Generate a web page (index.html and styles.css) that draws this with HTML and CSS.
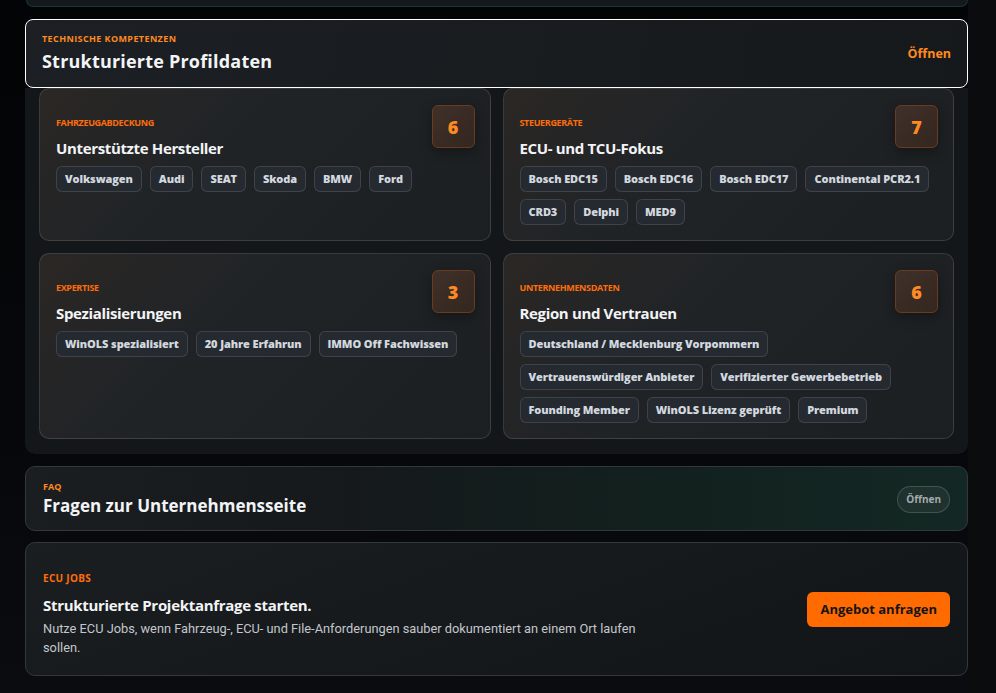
FILE: index.html
```html
<!DOCTYPE html>
<html lang="de">

<head>
    <meta charset="UTF-8">
    <meta name="viewport" content="width=device-width, initial-scale=1.0">
    <title>Unternehmensprofil</title>
    <link rel="stylesheet" href="styles.css">
</head>

<body>
    <div class="page">
        <main class="main">
            <div class="prev-card"></div>

            <section class="block">
                <div class="block-head">
                    <div>
                        <p class="eyebrow eyebrow-wide">Technische Kompetenzen</p>
                        <h2 class="block-title">Strukturierte Profildaten</h2>
                    </div>
                    <a class="link-open" href="#">Öffnen</a>
                </div>

                <div class="block-body">
                    <div class="card">
                        <div class="card-head">
                            <div class="card-text">
                                <p class="eyebrow eyebrow-card">Fahrzeugabdeckung</p>
                                <h3 class="card-title">Unterstützte Hersteller</h3>
                            </div>
                            <span class="count">6</span>
                        </div>
                        <div class="chips">
                            <span class="chip">Volkswagen</span>
                            <span class="chip">Audi</span>
                            <span class="chip">SEAT</span>
                            <span class="chip">Skoda</span>
                            <span class="chip">BMW</span>
                            <span class="chip">Ford</span>
                        </div>
                    </div>

                    <div class="card">
                        <div class="card-head">
                            <div class="card-text">
                                <p class="eyebrow eyebrow-card">Steuergeräte</p>
                                <h3 class="card-title">ECU- und TCU-Fokus</h3>
                            </div>
                            <span class="count">7</span>
                        </div>
                        <div class="chips">
                            <span class="chip">Bosch EDC15</span>
                            <span class="chip">Bosch EDC16</span>
                            <span class="chip">Bosch EDC17</span>
                            <span class="chip">Continental PCR2.1</span>
                            <span class="chip">CRD3</span>
                            <span class="chip">Delphi</span>
                            <span class="chip">MED9</span>
                        </div>
                    </div>

                    <div class="card">
                        <div class="card-head">
                            <div class="card-text">
                                <p class="eyebrow eyebrow-card">Expertise</p>
                                <h3 class="card-title">Spezialisierungen</h3>
                            </div>
                            <span class="count">3</span>
                        </div>
                        <div class="chips">
                            <span class="chip">WinOLS spezialisiert</span>
                            <span class="chip">20 Jahre Erfahrun</span>
                            <span class="chip">IMMO Off Fachwissen</span>
                        </div>
                    </div>

                    <div class="card">
                        <div class="card-head">
                            <div class="card-text">
                                <p class="eyebrow eyebrow-card">Unternehmensdaten</p>
                                <h3 class="card-title">Region und Vertrauen</h3>
                            </div>
                            <span class="count">6</span>
                        </div>
                        <div class="chips">
                            <span class="chip">Deutschland / Mecklenburg Vorpommern</span>
                            <span class="chip">Vertrauenswürdiger Anbieter</span>
                            <span class="chip">Verifizierter Gewerbebetrieb</span>
                            <span class="chip">Founding Member</span>
                            <span class="chip">WinOLS Lizenz geprüft</span>
                            <span class="chip">Premium</span>
                        </div>
                    </div>
                </div>
            </section>

            <section class="faq">
                <div>
                    <p class="eyebrow">FAQ</p>
                    <h2 class="faq-title">Fragen zur Unternehmensseite</h2>
                </div>
                <button class="pill">Öffnen</button>
            </section>

            <section class="cta">
                <div class="cta-text">
                    <p class="eyebrow eyebrow-jobs">ECU Jobs</p>
                    <h2 class="cta-title">Strukturierte Projektanfrage starten.</h2>
                    <p class="cta-copy">Nutze ECU Jobs, wenn Fahrzeug-, ECU- und File-Anforderungen sauber dokumentiert an einem Ort laufen sollen.</p>
                </div>
                <button class="btn-orange">Angebot anfragen</button>
            </section>
        </main>
        <div class="rail"></div>
    </div>
</body>

</html>
```

FILE: styles.css
```css
* {
    margin: 0;
    padding: 0;
    box-sizing: border-box;
}

body {
    background: #090b0e;
    font-family: "Open Sans", "Noto Sans", sans-serif;
    color: #f2f4f6;
    overflow: hidden;
}

.page {
    display: flex;
    height: 693px;
}

.main {
    width: 968px;
    padding-left: 25px;
    background: linear-gradient(180deg, #020405 0%, #05070a 60%, #0a0c0f 100%);
}

.rail {
    flex: 1;
    background: #0a0c0e;
}

/* leftover bottom of the card above */
.prev-card {
    height: 7px;
    margin-left: 1px;
    border: 1px solid #1b3633;
    border-top: 0;
    border-radius: 0 0 10px 10px;
    background: #15191b;
}

.eyebrow {
    font-size: 9px;
    line-height: 12px;
    font-weight: 700;
    text-transform: uppercase;
    color: #ff8a1f;
}

.eyebrow-wide {
    letter-spacing: 0.4px;
}

.eyebrow-card {
    letter-spacing: -0.35px;
    color: #ff6d0a;
}

.eyebrow-jobs {
    font-size: 10px;
    letter-spacing: 0.3px;
    color: #ff6d0a;
}

/* Technische Kompetenzen */
.block {
    margin-top: 12px;
}

.block-head {
    display: flex;
    justify-content: space-between;
    align-items: center;
    padding: 13px 16px 14px 16px;
    border: 1px solid #ffffff;
    border-radius: 8px;
    background: linear-gradient(100deg, #1c1f23, #16191c);
}

.block-title {
    margin-top: 4px;
    font-size: 18px;
    line-height: 24px;
    font-weight: 700;
    letter-spacing: 0.2px;
}

.link-open {
    color: #ff8a1f;
    font-size: 12.5px;
    font-weight: 700;
    text-decoration: none;
}

.block-body {
    display: grid;
    grid-template-columns: 1fr 1fr;
    gap: 12px;
    padding: 0 14px 15px;
    background: #14171a;
    border-radius: 0 0 10px 10px;
}

.card {
    padding: 16px 15px 15px 16px;
    border: 1px solid rgba(255, 255, 255, 0.12);
    border-radius: 10px;
    background: linear-gradient(135deg, #2b2724 0%, #212427 35%, #1c1f22 100%);
}

.card-head {
    display: flex;
    justify-content: space-between;
    align-items: flex-start;
}

.card-text {
    padding-top: 12px;
}

.card-title {
    margin-top: 9px;
    font-size: 15px;
    line-height: 20px;
    font-weight: 700;
    letter-spacing: -0.35px;
}

.count {
    display: flex;
    align-items: center;
    justify-content: center;
    width: 43px;
    height: 43px;
    border: 1px solid #6a3b1c;
    border-radius: 6px;
    background: linear-gradient(135deg, #40302a, #33271f);
    color: #ff8a24;
    font-size: 18px;
    font-weight: 800;
    box-shadow: 0 4px 12px rgba(0, 0, 0, 0.35);
}

.chips {
    display: flex;
    flex-wrap: wrap;
    gap: 7px 8px;
    margin-top: 8px;
}

.chip {
    padding: 5px 8px;
    font-size: 11px;
    line-height: 14px;
    font-weight: 800;
    letter-spacing: -0.1px;
    color: #d3d8df;
    background: #252a30;
    border: 1px solid rgba(255, 255, 255, 0.12);
    border-radius: 6px;
}

/* FAQ */
.faq {
    display: flex;
    justify-content: space-between;
    align-items: center;
    margin-top: 12px;
    padding: 14px 17px 13px 17px;
    border: 1px solid #33383c;
    border-radius: 10px;
    background: linear-gradient(90deg, #1b1e21 0%, #15191b 35%, #12211e 70%, #132824 100%);
}

.faq-title {
    margin-top: 2px;
    font-size: 17px;
    line-height: 22px;
    font-weight: 700;
}

.pill {
    padding: 6px 8px;
    font-family: inherit;
    font-size: 10px;
    line-height: 13px;
    font-weight: 700;
    color: #a5aaae;
    background: rgba(255, 255, 255, 0.05);
    border: 1px solid rgba(255, 255, 255, 0.16);
    border-radius: 14px;
}

/* ECU Jobs */
.cta {
    display: flex;
    justify-content: space-between;
    align-items: center;
    margin-top: 11px;
    padding: 29px 17px 18px 17px;
    border: 1px solid #33383c;
    border-radius: 10px;
    background: linear-gradient(160deg, #1b1e21, #121518);
}

.cta-title {
    margin-top: 11px;
    font-size: 15px;
    line-height: 20px;
    font-weight: 700;
    letter-spacing: -0.3px;
}

.cta-copy {
    max-width: 620px;
    margin-top: 4px;
    font-family: Roboto, "Liberation Sans", sans-serif;
    font-size: 12.8px;
    line-height: 19px;
    color: #c3c7cc;
}

.btn-orange {
    margin-bottom: 10px;
    padding: 9px 13px;
    font-family: inherit;
    font-size: 13px;
    line-height: 17px;
    font-weight: 700;
    color: #141414;
    background: #ff6b00;
    border: 0;
    border-radius: 6px;
}
```
